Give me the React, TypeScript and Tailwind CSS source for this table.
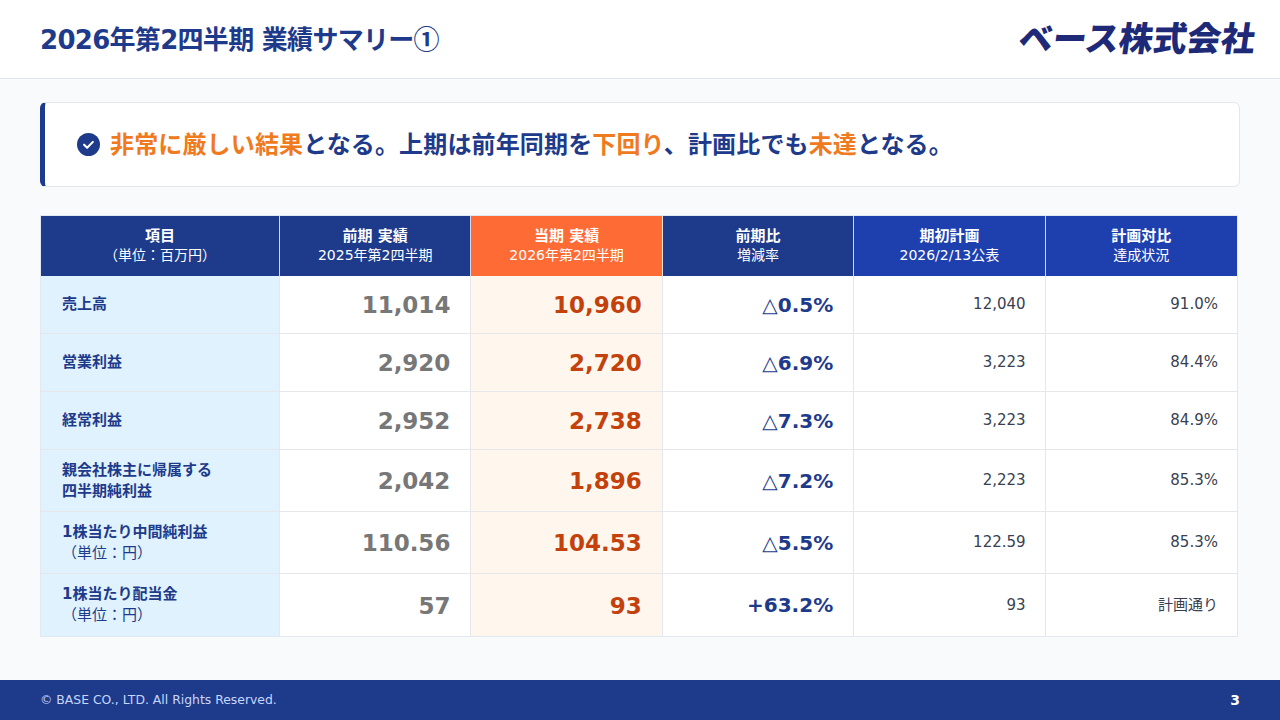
import * as React from "react";

// Row data for the summary table
interface Row {
  label: string[];
  prev: string;
  curr: string;
  rate: string;
  plan: string;
  achieve: string;
  tall?: boolean;
}

const rows: Row[] = [
  { label: ["売上高"], prev: "11,014", curr: "10,960", rate: "△0.5%", plan: "12,040", achieve: "91.0%" },
  { label: ["営業利益"], prev: "2,920", curr: "2,720", rate: "△6.9%", plan: "3,223", achieve: "84.4%" },
  { label: ["経常利益"], prev: "2,952", curr: "2,738", rate: "△7.3%", plan: "3,223", achieve: "84.9%" },
  { label: ["親会社株主に帰属する", "四半期純利益"], prev: "2,042", curr: "1,896", rate: "△7.2%", plan: "2,223", achieve: "85.3%", tall: true },
  { label: ["1株当たり中間純利益", "（単位：円）"], prev: "110.56", curr: "104.53", rate: "△5.5%", plan: "122.59", achieve: "85.3%", tall: true },
  { label: ["1株当たり配当金", "（単位：円）"], prev: "57", curr: "93", rate: "+63.2%", plan: "93", achieve: "計画通り", tall: true },
];

const heads = [
  { top: "項目", sub: "（単位：百万円）", bg: "bg-[#1e3a8a]" },
  { top: "前期 実績", sub: "2025年第2四半期", bg: "bg-[#1e3a8a]" },
  { top: "当期 実績", sub: "2026年第2四半期", bg: "bg-[#ff6b35]" },
  { top: "前期比", sub: "増減率", bg: "bg-[#1e3a8a]" },
  { top: "期初計画", sub: "2026/2/13公表", bg: "bg-[#1e40af]" },
  { top: "計画対比", sub: "達成状況", bg: "bg-[#1e40af]" },
];

function CheckCircle() {
  return (
    <svg width="23" height="23" viewBox="0 0 22 22" aria-hidden="true">
      <circle cx="11" cy="11" r="11" fill="#1e3a8a" />
      <path d="M6.8 11.2l2.9 2.9 5.5-5.6" fill="none" stroke="#fff" strokeWidth="2" strokeLinecap="round" strokeLinejoin="round" />
    </svg>
  );
}

export default function App() {
  return (
    <div className="flex h-[720px] w-[1280px] flex-col bg-[#f8fafc] font-['DejaVu_Sans','Noto_Sans_CJK_JP',sans-serif]">
      {/* header */}
      <header className="flex h-[79px] shrink-0 items-center justify-between border-b border-[#e2e8f0] bg-white pl-10 pr-[25px]">
        <h1 className="text-[26px] font-bold tracking-[-0.7px] text-[#1e3a8a]">
          2026年第2四半期 業績サマリー<span className="font-['Noto_Sans_CJK_JP']">①</span>
        </h1>
        <div className="-skew-x-8 text-[34px] font-black leading-none text-[#1e2a78]">ベース株式会社</div>
      </header>

      <main className="flex flex-1 flex-col px-10 pt-[23px]">
        {/* callout */}
        <div className="flex h-[85px] items-center rounded-md border border-[#e5e7eb] border-l-[5px] border-l-[#1e3a8a] bg-white pl-[32px]">
          <CheckCircle />
          <p className="ml-[10px] text-[24px] font-bold tracking-[0.15px] text-[#1e3a8a]">
            <span className="text-[#f07a1e]">非常に厳しい結果</span>となる。上期は前年同期を
            <span className="text-[#f07a1e]">下回り</span>、計画比でも
            <span className="text-[#f07a1e]">未達</span>となる。
          </p>
        </div>

        {/* table */}
        <div className="mt-[28px] grid w-[1198px] grid-cols-[239px_repeat(5,1fr)] border border-[#e2e8f0] bg-white">
          {heads.map((h, i) => (
            <div
              key={i}
              className={`flex h-[60px] flex-col items-center justify-center text-white ${h.bg} ${i < 5 ? "border-r border-white/80" : ""}`}
            >
              <span className="text-[15px] font-bold leading-[19px]">{h.top}</span>
              <span className="text-[14px] leading-[19px]">{h.sub}</span>
            </div>
          ))}

          {rows.map((r, i) => {
            const h = r.tall ? "h-[62px]" : "h-[58px]";
            const b = i < rows.length - 1 ? "border-b border-[#e5e7eb]" : "";
            return (
              <React.Fragment key={i}>
                <div className={`flex ${h} ${b} flex-col justify-center border-r border-[#e5e7eb] bg-[#e0f2fe] pl-[21px]`}>
                  <span className="text-[15px] font-bold leading-[21px] text-[#1e3a8a]">{r.label[0]}</span>
                  {r.label[1] && (
                    <span
                      className={`text-[15px] leading-[21px] text-[#1e3a8a] ${r.label[1].startsWith("（") ? "font-normal" : "font-bold"}`}
                    >
                      {r.label[1]}
                    </span>
                  )}
                </div>
                <div className={`flex ${h} ${b} items-center justify-end border-r border-[#e5e7eb] pr-[20px] pt-[2px] text-[23px] font-bold text-[#777777]`}>
                  {r.prev}
                </div>
                <div className={`flex ${h} ${b} items-center justify-end border-r border-[#e5e7eb] bg-[#fff7ed] pr-[20px] pt-[2px] text-[23px] font-bold text-[#c2410c]`}>
                  {r.curr}
                </div>
                <div className={`flex ${h} ${b} items-center justify-end border-r border-[#e5e7eb] pr-[20px] text-[20px] font-bold text-[#1e3a8a]`}>
                  {r.rate}
                </div>
                <div className={`flex ${h} ${b} items-center justify-end border-r border-[#e5e7eb] pr-[19px] text-[15px] text-[#374151]`}>
                  {r.plan}
                </div>
                <div className={`flex ${h} ${b} items-center justify-end pr-[19px] text-[15px] text-[#374151]`}>
                  {r.achieve}
                </div>
              </React.Fragment>
            );
          })}
        </div>
      </main>

      {/* footer */}
      <footer className="flex h-[40px] shrink-0 items-center justify-between bg-[#1e3a8a] pl-10 pr-[40px]">
        <span className="text-[12.4px] text-[#c7d7fe]">© BASE CO., LTD. All Rights Reserved.</span>
        <span className="text-[14px] font-bold text-white">3</span>
      </footer>
    </div>
  );
}
